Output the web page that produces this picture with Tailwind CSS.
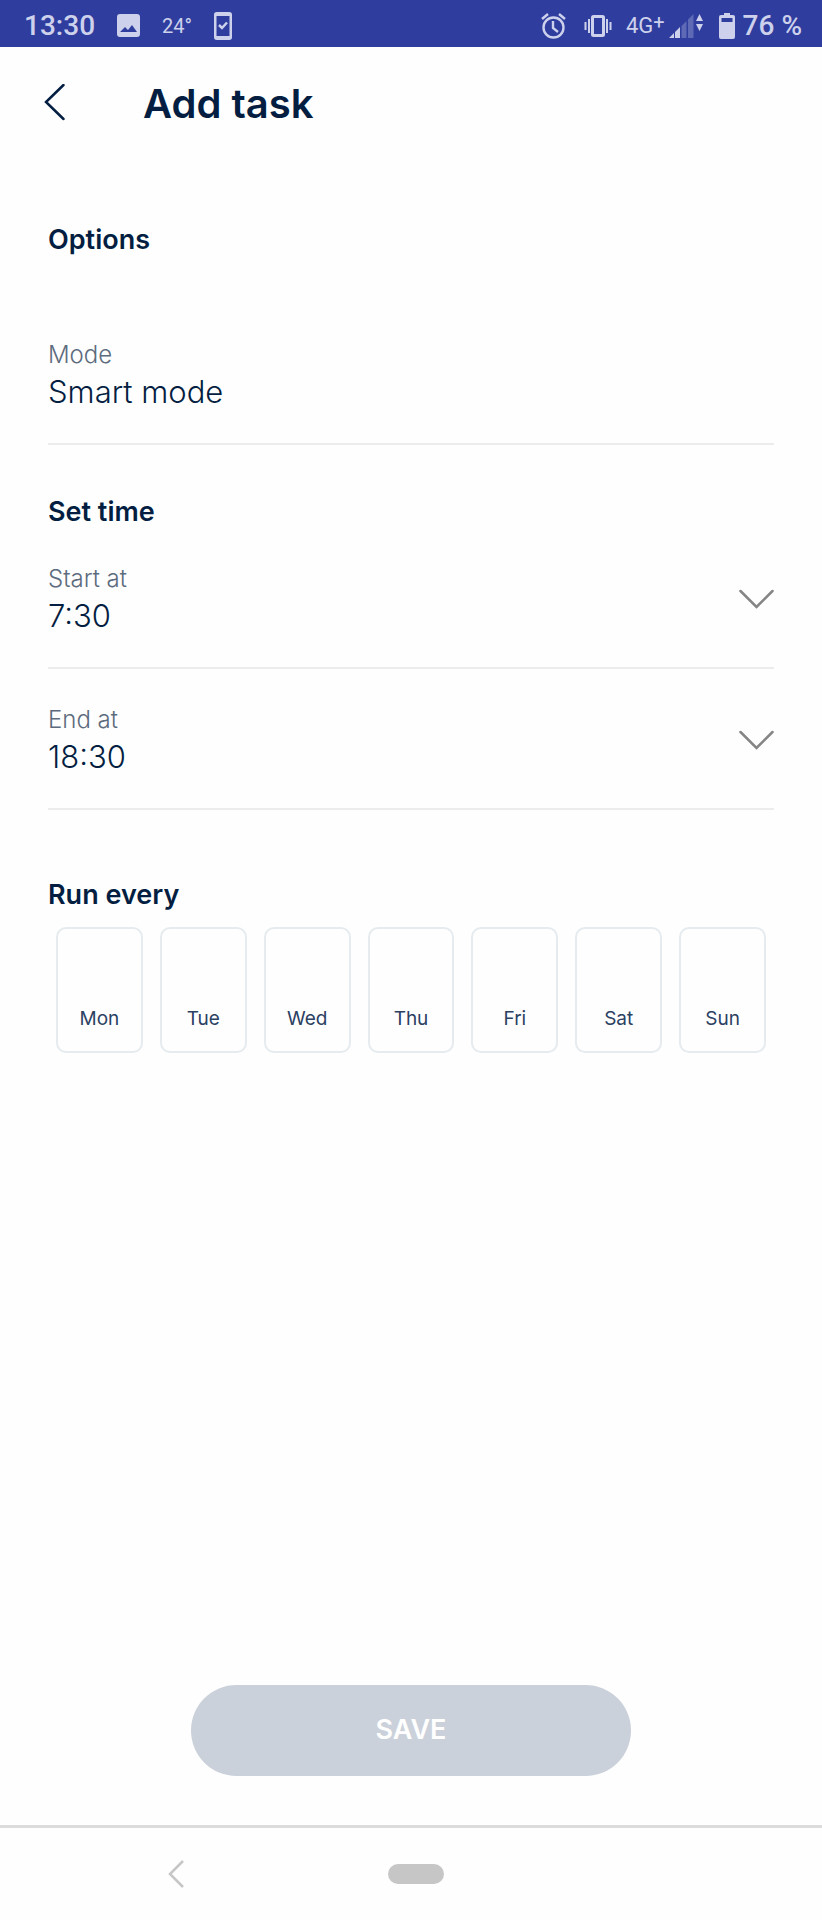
<!DOCTYPE html>
<html lang="en">
<head>
  <meta charset="UTF-8">
  <title>Add task</title>
  <meta name="viewport" content="width=device-width, initial-scale=1.0">
  <script src="https://cdn.jsdelivr.net/npm/@tailwindcss/browser@4"></script>
</head>
<body class="min-h-screen flex flex-col bg-[#fefefe] text-[#041e42] font-[Inter,sans-serif]">

  <!-- status bar -->
  <div class="h-[47px] flex items-center justify-between pl-6 pr-5 pt-1 bg-[#2f3e9e] text-[#cdd1ec] font-[Roboto,sans-serif]">
    <div class="flex items-center gap-[22px]">
      <span class="text-[28px] leading-8 font-medium">13:30</span>
      <svg class="w-[23px] h-[23px]" viewBox="0 0 23 23" fill="currentColor">
        <path fill-rule="evenodd" d="M3 0h17a3 3 0 0 1 3 3v17a3 3 0 0 1-3 3H3a3 3 0 0 1-3-3V3a3 3 0 0 1 3-3zM3 18h17l-5-7-4 5-3-3z"/>
      </svg>
      <span class="text-[20px] leading-7">24°</span>
      <svg class="w-[18px] h-7" viewBox="0 0 18 28" fill="none" stroke="currentColor">
        <rect x="1.250" y="1.250" width="15.500" height="25.500" rx="1.500" stroke-width="2.500"/>
        <path stroke-width="2" d="M1 3h16M1 25h16"/>
        <path stroke-width="2.500" d="M5 13l3 3 5-5.500"/>
      </svg>
    </div>
    <div class="flex items-center">
      <svg class="w-[25px] h-[26px]" viewBox="0 0 25 26" fill="none" stroke="currentColor" stroke-width="2.400">
        <circle cx="12.500" cy="14.500" r="10"/>
        <path d="M12 8v7l5 4M1 6l6-5M24 6l-6-5"/>
      </svg>
      <svg class="w-7 h-[22px] ml-[18px]" viewBox="0 0 28 22" fill="none" stroke="currentColor" stroke-width="2">
        <rect x="8.500" y="1.500" width="11" height="19" rx="1" stroke-width="3"/>
        <path d="M5 4v14M1.500 7v8M23 4v14M26.500 7v8"/>
      </svg>
      <span class="flex items-start ml-[14px]">
        <span class="text-[22px] leading-7">4G</span><span class="text-[20px] leading-5">+</span>
      </span>
      <svg class="w-[34px] h-[26px] ml-1" viewBox="0 0 34 26" fill="currentColor">
        <path d="M0 25l5-5v5zM6 19l5-5v11H6z"/>
        <path opacity=".3" d="M12.500 13l5-5v17h-5zM19 6.500L24.500 1v24H19z"/>
        <path d="M27 8l3.500-7L34 8zM27 11h7l-3.500 7z"/>
      </svg>
      <svg class="w-4 h-[26px] ml-4" viewBox="0 0 16 26" fill="currentColor">
        <path fill-rule="evenodd" d="M5 0h6v2h3a2 2 0 0 1 2 2v20a2 2 0 0 1-2 2H2a2 2 0 0 1-2-2V4a2 2 0 0 1 2-2h3zM2.500 5v4h11V5z"/>
      </svg>
      <span class="ml-2 text-[28px] leading-8 font-medium">76 %</span>
    </div>
  </div>

  <header class="h-[113px] flex items-center pl-11">
    <button type="button" aria-label="Back">
      <svg class="w-[22px] h-10" viewBox="0 0 22 40" fill="none" stroke="currentColor" stroke-width="2.500" stroke-linecap="round">
        <path d="M19.500 1L2 18l17.500 17"/>
      </svg>
    </button>
    <h1 class="ml-[77px] text-[40px] leading-12 font-semibold">Add task</h1>
  </header>

  <main class="flex-1 flex flex-col px-12">
    <h2 class="mt-16 text-[27px] leading-8 font-semibold">Options</h2>

    <div class="mt-[83px] pb-[30px] border-b-2 border-[#ececec]">
      <p class="text-[24px] leading-8 font-light text-[#5c6b7d]">Mode</p>
      <p class="text-[31px] leading-[42px] font-light">Smart mode</p>
    </div>

    <h2 class="mt-[51px] text-[27px] leading-8 font-semibold">Set time</h2>

    <div class="relative mt-[35px] pb-[30px] border-b-2 border-[#ececec]">
      <label for="start" class="block text-[24px] leading-8 font-light text-[#5c6b7d]">Start at</label>
      <select id="start" class="block w-full h-[42px] appearance-none bg-transparent text-[31px] leading-[42px] font-light">
        <option>7:00</option>
        <option selected>7:30</option>
        <option>8:00</option>
      </select>
      <svg class="absolute right-0 top-6.5 w-9 h-5 pointer-events-none text-[#858585]" viewBox="0 0 36 20" fill="none" stroke="currentColor" stroke-width="2.500" stroke-linecap="round">
        <path d="M2.500 2l16 16L34.500 2"/>
      </svg>
    </div>

    <div class="relative mt-[35px] pb-[30px] border-b-2 border-[#ececec]">
      <label for="end" class="block text-[24px] leading-8 font-light text-[#5c6b7d]">End at</label>
      <select id="end" class="block w-full h-[42px] appearance-none bg-transparent text-[31px] leading-[42px] font-light">
        <option>18:00</option>
        <option selected>18:30</option>
        <option>19:00</option>
      </select>
      <svg class="absolute right-0 top-6.5 w-9 h-5 pointer-events-none text-[#858585]" viewBox="0 0 36 20" fill="none" stroke="currentColor" stroke-width="2.500" stroke-linecap="round">
        <path d="M2.500 2l16 16L34.500 2"/>
      </svg>
    </div>

    <fieldset class="mt-[69px]">
      <legend class="text-[27px] leading-8 font-semibold">Run every</legend>
      <div id="days" class="mt-4 px-2 grid grid-cols-7 gap-[17px] text-[19px] leading-6 text-[#2b4162]"></div>
    </fieldset>

    <button type="submit" class="w-full max-w-[440px] h-[91px] mt-auto mb-[49px] mx-auto rounded-full bg-[#cbd1da] text-white text-[27px] font-semibold">SAVE</button>
  </main>

  <!-- system navigation -->
  <nav class="h-[95px] grid grid-cols-[39fr_56px_38fr] items-center border-t-3 border-[#dcdcdc]">
    <button type="button" aria-label="System back" class="justify-self-center mr-9">
      <svg class="w-4 h-7" viewBox="0 0 16 28" fill="none" stroke="#c6c6c6" stroke-width="2.500">
        <path d="M15 1L2 14l13 13"/>
      </svg>
    </button>
    <button type="button" aria-label="Home" class="h-5 rounded-full bg-[#c6c6c6]"></button>
  </nav>

  <script>
    const days = ['Mon', 'Tue', 'Wed', 'Thu', 'Fri', 'Sat', 'Sun'];

    document.getElementById('days').innerHTML = days.map(day => `
      <label class="relative h-[126px] pb-5 flex items-end justify-center border-2 border-[#e5ebee] rounded-[10px] has-checked:border-[#041e42]">
        <input type="checkbox" name="days" value="${day}" class="absolute inset-0 appearance-none">
        ${day}
      </label>
    `).join('');
  </script>

</body>
</html>
